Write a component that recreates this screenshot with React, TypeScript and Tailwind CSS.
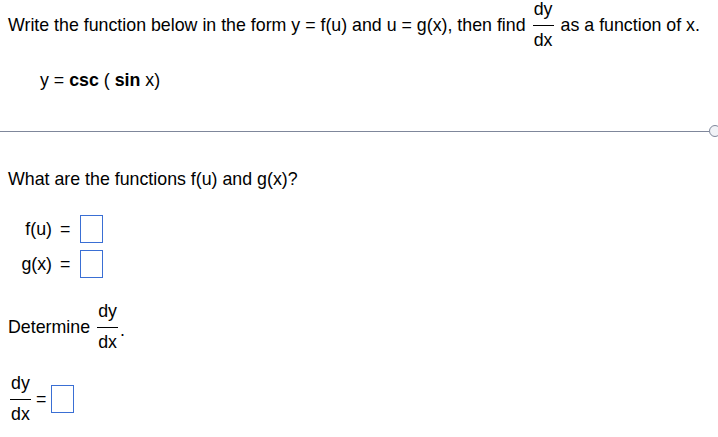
const Frac = ({ className = "" }: { className?: string }) => (
  <span className={`inline-flex flex-col items-center ${className}`}>
    <span className="leading-[20px] mb-[6px]">dy</span>
    <span className="block h-px w-[21px] bg-black" />
    <span className="leading-[20px] mt-[4px]">dx</span>
  </span>
);

const AnswerBox = () => (
  <span className="inline-block w-[23px] h-[28px] border border-[#3a6fd4] bg-white" />
);

export default function App() {
  return (
    <div className="w-full h-[437px] bg-white overflow-hidden font-['Liberation_Sans',Arial,sans-serif] text-[17.8px] leading-[20px] text-black">
      <div className="pl-[8px] flex flex-col">
        {/* prompt */}
        <div className="flex items-center h-[49px] whitespace-nowrap">
          <span>Write the function below in the form y = f(u) and u = g(x), then find</span>
          <Frac className="mx-[7px]" />
          <span>as a function of x.</span>
        </div>

        <div className="mt-[21px] ml-[32px] whitespace-pre">
          y = <b>csc</b> ( <b>sin</b> x)
        </div>

        {/* divider with handle */}
        <div className="mt-[34px] -ml-[8px] w-[721px] h-[14px] flex items-center">
          <div className="flex-1 h-px bg-[#7f879b]" />
          <div className="w-[12px] h-[12px] rounded-full border border-[#7f879b] bg-[#f1f3f7]" />
        </div>

        <div className="mt-[31px]">What are the functions f(u) and g(x)?</div>

        <div className="mt-[26px] flex flex-col gap-[7px]">
          <div className="flex items-center h-[28px]">
            <span className="ml-[13px] w-[31px] text-right">f(u)</span>
            <span className="ml-[8px] mr-[10px]">=</span>
            <AnswerBox />
          </div>
          <div className="flex items-center h-[28px]">
            <span className="ml-[13px] w-[31px] text-right">g(x)</span>
            <span className="ml-[8px] mr-[10px]">=</span>
            <AnswerBox />
          </div>
        </div>

        <div className="mt-[24px] flex items-center h-[49px]">
          <span>Determine</span>
          <Frac className="ml-[7px]" />
          <span className="self-end mb-[11px] ml-[2px]">.</span>
        </div>

        <div className="mt-[23px] flex items-center h-[49px]">
          <Frac className="ml-[2px]" />
          <span className="ml-[5px] mr-[5px]">=</span>
          <AnswerBox />
        </div>
      </div>
    </div>
  );
}
